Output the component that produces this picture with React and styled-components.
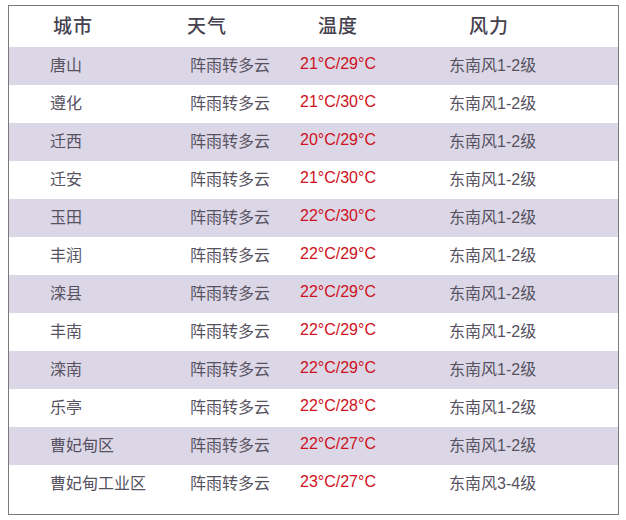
import React from "react";
import styled, { createGlobalStyle } from "styled-components";

const rows = [
  { city: "唐山", weather: "阵雨转多云", temp: "21°C/29°C", wind: "东南风1-2级" },
  { city: "遵化", weather: "阵雨转多云", temp: "21°C/30°C", wind: "东南风1-2级" },
  { city: "迁西", weather: "阵雨转多云", temp: "20°C/29°C", wind: "东南风1-2级" },
  { city: "迁安", weather: "阵雨转多云", temp: "21°C/30°C", wind: "东南风1-2级" },
  { city: "玉田", weather: "阵雨转多云", temp: "22°C/30°C", wind: "东南风1-2级" },
  { city: "丰润", weather: "阵雨转多云", temp: "22°C/29°C", wind: "东南风1-2级" },
  { city: "滦县", weather: "阵雨转多云", temp: "22°C/29°C", wind: "东南风1-2级" },
  { city: "丰南", weather: "阵雨转多云", temp: "22°C/29°C", wind: "东南风1-2级" },
  { city: "滦南", weather: "阵雨转多云", temp: "22°C/29°C", wind: "东南风1-2级" },
  { city: "乐亭", weather: "阵雨转多云", temp: "22°C/28°C", wind: "东南风1-2级" },
  { city: "曹妃甸区", weather: "阵雨转多云", temp: "22°C/27°C", wind: "东南风1-2级" },
  { city: "曹妃甸工业区", weather: "阵雨转多云", temp: "23°C/27°C", wind: "东南风3-4级" },
];

const headers = [
  { label: "城市", indent: 3 },
  { label: "天气", indent: -3 },
  { label: "温度", indent: 18 },
  { label: "风力", indent: 20 },
];

const GlobalStyle = createGlobalStyle`
  body {
    margin: 0;
    background: #ffffff;
    font-family: "Liberation Sans", "Noto Sans CJK SC", sans-serif;
  }
`;

const Page = styled.div`
  padding: 5px 7px 6px 8px;
`;

const Table = styled.div`
  border: 1px solid #7a7a7a;
  padding-bottom: 11px;
`;

const Row = styled.div`
  display: grid;
  grid-template-columns: 140px 110px 149px 1fr;
  align-items: center;
  height: ${(p) => (p.$head ? 41 : 38)}px;
  padding-left: 41px;
  background: ${(p) => (p.$shaded ? "#dcd7e7" : "transparent")};
`;

const HeadCell = styled.div`
  font-family: "Noto Sans CJK SC", sans-serif;
  font-size: 19px;
  font-weight: 500;
  color: #45414f;
  letter-spacing: 1px;
  margin-left: ${(p) => p.$indent}px;
  padding-bottom: 5px;
`;

const Cell = styled.div`
  font-family: "Liberation Sans", "Noto Sans CJK SC", sans-serif;
  font-size: 16px;
  color: ${(p) => (p.$hot ? "#cf1020" : "#56525f")};
  white-space: nowrap;
  padding-bottom: 5px;
`;

export default function App() {
  return (
    <Page>
      <GlobalStyle />
      <Table>
        <Row $head>
          {headers.map((h) => (
            <HeadCell key={h.label} $indent={h.indent}>
              {h.label}
            </HeadCell>
          ))}
        </Row>
        {rows.map((r, i) => (
          <Row key={r.city} $shaded={i % 2 === 0}>
            <Cell>{r.city}</Cell>
            <Cell>{r.weather}</Cell>
            <Cell $hot>{r.temp}</Cell>
            <Cell>{r.wind}</Cell>
          </Row>
        ))}
      </Table>
    </Page>
  );
}
